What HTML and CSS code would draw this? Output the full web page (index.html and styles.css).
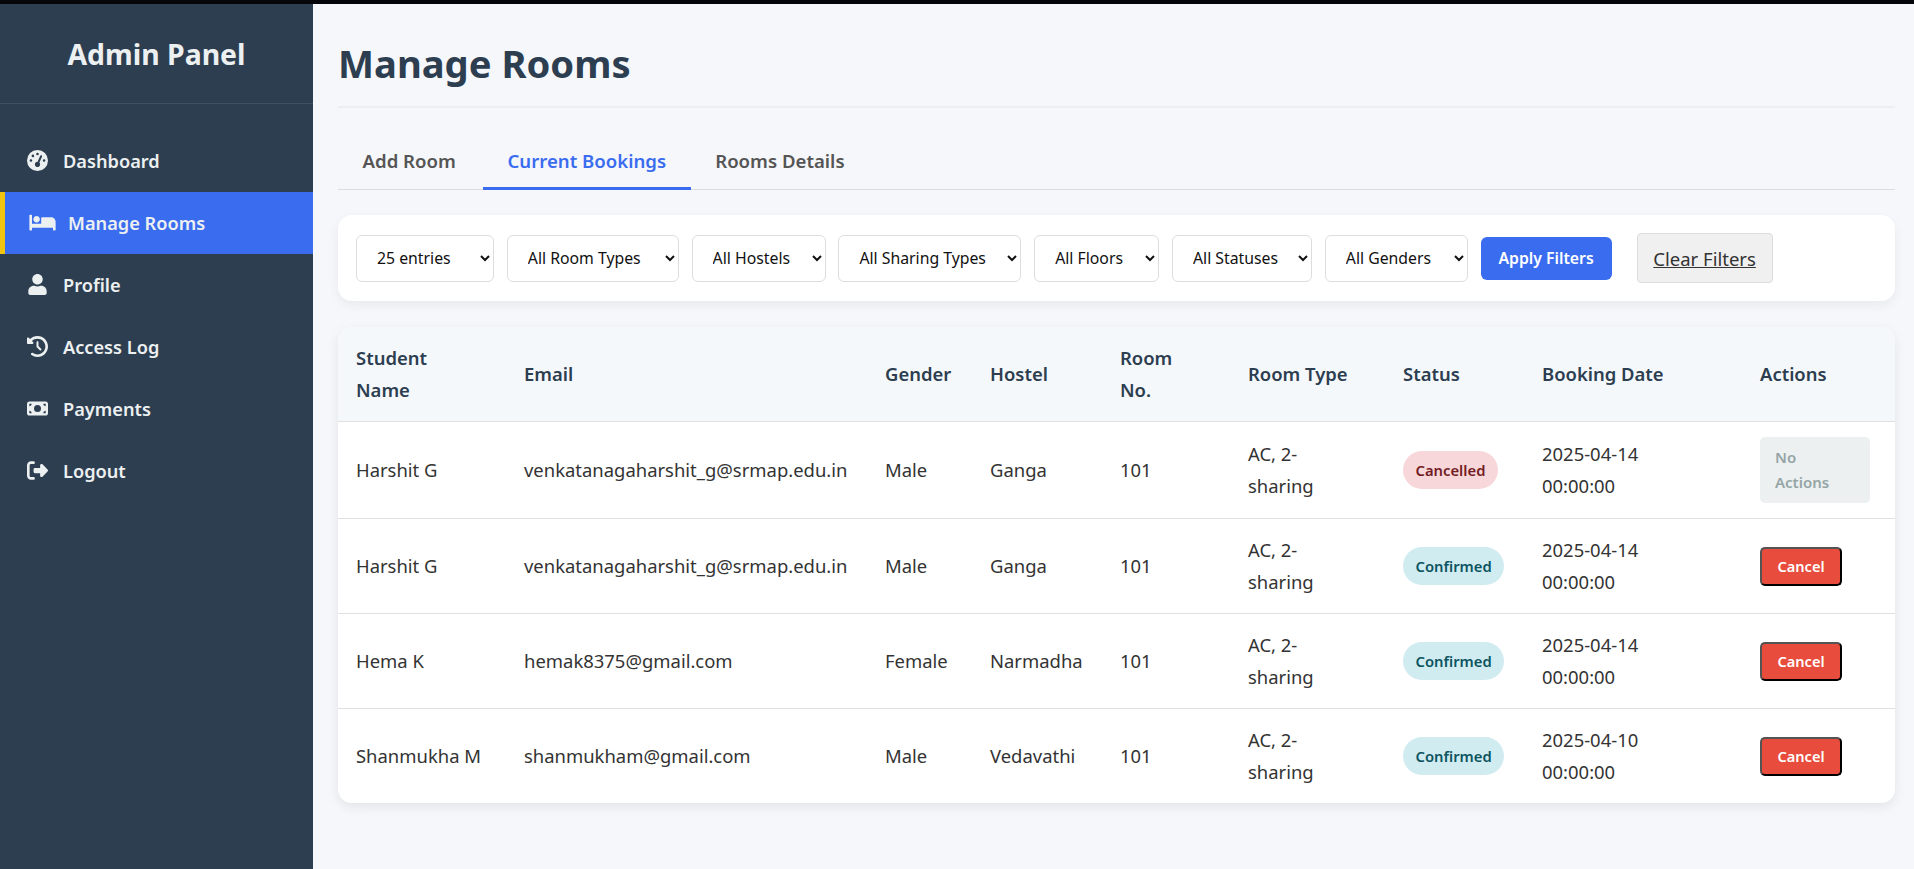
FILE: index.html
```html
<!DOCTYPE html>
<html lang="en">
  <head>
    <meta charset="UTF-8" />
    <meta name="viewport" content="width=device-width, initial-scale=1.0" />
    <title>Manage Rooms</title>
    <link rel="stylesheet" href="styles.css">
  </head>
  <body>
    <div class="top-strip"></div>
    <div class="layout">
      <aside class="sidebar">
        <div class="sidebar-header"><h2>Admin Panel</h2></div>
        <ul class="nav">
          <li>
            <a href="#">
              <svg class="icon" viewBox="0 0 512 512"><path d="M0 256a256 256 0 1 1 512 0A256 256 0 1 1 0 256zM288 96a32 32 0 1 0 -64 0 32 32 0 1 0 64 0zM256 416c35.3 0 64-28.7 64-64c0-17.4-6.9-33.1-18.1-44.6L366 161.7c5.3-12.1-.2-26.3-12.3-31.6s-26.3 .2-31.6 12.3L257.9 288c-.6 0-1.3 0-1.9 0c-35.3 0-64 28.7-64 64s28.7 64 64 64zM176 144a32 32 0 1 0 -64 0 32 32 0 1 0 64 0zM96 288a32 32 0 1 0 0-64 32 32 0 1 0 0 64zm352-32a32 32 0 1 0 -64 0 32 32 0 1 0 64 0z"/></svg>
              Dashboard
            </a>
          </li>
          <li class="active">
            <a href="#">
              <svg class="icon icon-wide" viewBox="0 0 640 512"><path d="M176 256c44.11 0 80-35.89 80-80s-35.89-80-80-80-80 35.89-80 80 35.89 80 80 80zm352-128H304c-8.84 0-16 7.16-16 16v144H64V80c0-8.84-7.16-16-16-16H16C7.16 64 0 71.16 0 80v352c0 8.84 7.16 16 16 16h32c8.84 0 16-7.16 16-16v-48h512v48c0 8.84 7.16 16 16 16h32c8.84 0 16-7.16 16-16V240c0-61.86-50.14-112-112-112z"/></svg>
              Manage Rooms
            </a>
          </li>
          <li>
            <a href="#">
              <svg class="icon" viewBox="0 0 448 512"><path d="M224 256c70.7 0 128-57.3 128-128S294.7 0 224 0 96 57.3 96 128s57.3 128 128 128zm89.6 32h-16.7c-22.2 10.2-46.9 16-72.9 16s-50.6-5.8-72.9-16h-16.7C60.2 288 0 348.2 0 422.4V464c0 26.5 21.5 48 48 48h352c26.5 0 48-21.5 48-48v-41.6c0-74.2-60.2-134.4-134.4-134.4z"/></svg>
              Profile
            </a>
          </li>
          <li>
            <a href="#">
              <svg class="icon" viewBox="0 0 512 512"><path d="M75 75L41 41C25.9 25.9 0 36.6 0 57.9V168c0 13.3 10.7 24 24 24H134.1c21.4 0 32.1-25.9 17-41l-30.8-30.8C155 85.5 203 64 256 64c106 0 192 86 192 192s-86 192-192 192c-40.8 0-78.6-12.7-109.7-34.4c-14.5-10.1-34.4-6.6-44.6 7.9s-6.6 34.4 7.9 44.6C151.2 495 201.7 512 256 512c141.4 0 256-114.6 256-256S397.4 0 256 0C185.3 0 121.3 28.7 75 75zm181 53c-13.3 0-24 10.7-24 24V256c0 6.4 2.5 12.5 7 17l72 72c9.4 9.4 24.6 9.4 33.9 0s9.4-24.6 0-33.9l-65-65V152c0-13.3-10.7-24-24-24z"/></svg>
              Access Log
            </a>
          </li>
          <li>
            <a href="#">
              <svg class="icon" viewBox="0 0 576 512"><path d="M64 64C28.7 64 0 92.7 0 128V384c0 35.3 28.7 64 64 64H512c35.3 0 64-28.7 64-64V128c0-35.3-28.7-64-64-64H64zm64 320H64V320c35.3 0 64 28.7 64 64zM64 192V128h64c0 35.3-28.7 64-64 64zM448 384c0-35.3 28.7-64 64-64v64H448zm64-192c-35.3 0-64-28.7-64-64h64v64zM288 160a96 96 0 1 1 0 192 96 96 0 1 1 0-192z"/></svg>
              Payments
            </a>
          </li>
          <li>
            <a href="#">
              <svg class="icon" viewBox="0 0 512 512"><path d="M377.9 105.9L500.7 228.7c7.2 7.2 11.3 17.1 11.3 27.3s-4.1 20.1-11.3 27.3L377.9 406.1c-6.4 6.4-15 9.9-24 9.9c-18.7 0-33.9-15.2-33.9-33.9l0-62.1-128 0c-17.7 0-32-14.3-32-32l0-64c0-17.7 14.3-32 32-32l128 0 0-62.1c0-18.7 15.2-33.9 33.9-33.9c9 0 17.6 3.6 24 9.9zM160 96L96 96c-17.7 0-32 14.3-32 32l0 256c0 17.7 14.3 32 32 32l64 0c17.7 0 32 14.3 32 32s-14.3 32-32 32l-64 0c-53 0-96-43-96-96L0 128C0 75 43 32 96 32l64 0c17.7 0 32 14.3 32 32s-14.3 32-32 32z"/></svg>
              Logout
            </a>
          </li>
        </ul>
      </aside>

      <main class="content">
        <h1 class="page-title">Manage Rooms</h1>

        <div class="tabs">
          <a class="tab tab-first" href="#">Add Room</a>
          <a class="tab tab-active" href="#">Current Bookings</a>
          <a class="tab" href="#">Rooms Details</a>
        </div>

        <div class="filters">
          <select class="filter w-entries"><option>25 entries</option></select>
          <select class="filter w-types"><option>All Room Types</option></select>
          <select class="filter w-hostels"><option>All Hostels</option></select>
          <select class="filter w-sharing"><option>All Sharing Types</option></select>
          <select class="filter w-floors"><option>All Floors</option></select>
          <select class="filter w-statuses"><option>All Statuses</option></select>
          <select class="filter w-genders"><option>All Genders</option></select>
          <button class="apply-btn">Apply Filters</button>
          <a class="clear-btn" href="#">Clear Filters</a>
        </div>

        <div class="table-card">
          <table class="bookings">
            <colgroup>
              <col class="c-name"><col class="c-email"><col class="c-gender"><col class="c-hostel"><col class="c-room">
              <col class="c-type"><col class="c-status"><col class="c-date"><col class="c-actions">
            </colgroup>
            <thead>
              <tr>
                <th>Student<br>Name</th>
                <th>Email</th>
                <th>Gender</th>
                <th>Hostel</th>
                <th>Room<br>No.</th>
                <th>Room Type</th>
                <th>Status</th>
                <th>Booking Date</th>
                <th>Actions</th>
              </tr>
            </thead>
            <tbody>
              <tr>
                <td>Harshit G</td>
                <td>venkatanagaharshit_g@srmap.edu.in</td>
                <td>Male</td>
                <td>Ganga</td>
                <td>101</td>
                <td>AC, 2-<br>sharing</td>
                <td><span class="badge badge-cancelled">Cancelled</span></td>
                <td>2025-04-14<br>00:00:00</td>
                <td><span class="no-actions">No<br>Actions</span></td>
              </tr>
              <tr>
                <td>Harshit G</td>
                <td>venkatanagaharshit_g@srmap.edu.in</td>
                <td>Male</td>
                <td>Ganga</td>
                <td>101</td>
                <td>AC, 2-<br>sharing</td>
                <td><span class="badge badge-confirmed">Confirmed</span></td>
                <td>2025-04-14<br>00:00:00</td>
                <td><button class="cancel-btn">Cancel</button></td>
              </tr>
              <tr>
                <td>Hema K</td>
                <td>hemak8375@gmail.com</td>
                <td>Female</td>
                <td>Narmadha</td>
                <td>101</td>
                <td>AC, 2-<br>sharing</td>
                <td><span class="badge badge-confirmed">Confirmed</span></td>
                <td>2025-04-14<br>00:00:00</td>
                <td><button class="cancel-btn">Cancel</button></td>
              </tr>
              <tr>
                <td>Shanmukha M</td>
                <td>shanmukham@gmail.com</td>
                <td>Male</td>
                <td>Vedavathi</td>
                <td>101</td>
                <td>AC, 2-<br>sharing</td>
                <td><span class="badge badge-confirmed">Confirmed</span></td>
                <td>2025-04-10<br>00:00:00</td>
                <td><button class="cancel-btn">Cancel</button></td>
              </tr>
            </tbody>
          </table>
        </div>
      </main>
    </div>
  </body>
</html>
```

FILE: styles.css
```css
* {
  box-sizing: border-box;
}
body {
  margin: 0;
  height: 869px;
  overflow: hidden;
  font-family: "Noto Sans", sans-serif;
  background: #f5f7fb;
  color: #333;
}
.top-strip {
  height: 4px;
  background: #05060a;
}
.layout {
  display: flex;
  height: 865px;
}

/* sidebar */
.sidebar {
  width: 313px;
  flex-shrink: 0;
  background: #2c3e50;
  color: #ecf0f1;
}
.sidebar-header {
  height: 100px;
  border-bottom: 1px solid #3e5062;
  display: flex;
  align-items: center;
  justify-content: center;
}
.sidebar-header h2 {
  margin: 0;
  font-size: 28.4px;
  font-weight: 700;
}
.nav {
  list-style: none;
  margin: 25.5px 0 0;
  padding: 0;
}
.nav a {
  display: flex;
  align-items: center;
  gap: 15px;
  height: 62px;
  padding-left: 27px;
  color: #ecf0f1;
  text-decoration: none;
  font-size: 18.2px;
  font-weight: 600;
}
.nav .active a {
  background: #3a6cf0;
  border-left: 5px solid #f1c40f;
  padding-left: 24px;
  gap: 12px;
}
.icon {
  width: 21px;
  height: 21px;
  fill: #ecf0f1;
  flex-shrink: 0;
}
.icon-wide {
  width: 27px;
}

/* main */
.content {
  flex: 1;
  padding: 0 19px 0 25px;
}
.page-title {
  margin: 0;
  height: 104px;
  padding-top: 32px;
  border-bottom: 2px solid #eeeeee;
  color: #2c3e50;
  font-size: 38.2px;
  font-weight: 700;
  line-height: 54px;
}
.tabs {
  display: flex;
  margin-top: 23px;
  border-bottom: 1px solid #dddddd;
  height: 59px;
}
.tab {
  height: 59px;
  padding: 0 24.5px;
  display: flex;
  align-items: center;
  color: #555;
  text-decoration: none;
  font-size: 18.6px;
  font-weight: 600;
}
.tab-first {
  width: 145px;
}
.tab-active {
  color: #3a6cf0;
  border-bottom: 3px solid #3a6cf0;
  padding-top: 3px;
}

.filters {
  margin-top: 25px;
  height: 86px;
  padding: 0 18px;
  display: flex;
  align-items: center;
  background: #fff;
  border-radius: 14px;
  box-shadow: 0 4px 12px rgba(0, 0, 0, 0.06);
}
.filter {
  height: 47px;
  margin-right: 12.8px;
  padding: 0 4px 0 16px;
  background: #fff;
  border: 1px solid #dddddd;
  border-radius: 6px;
  font-family: inherit;
  font-size: 15.8px;
  color: #111;
}
.w-entries { width: 138px; }
.w-types { width: 172px; }
.w-hostels { width: 134px; }
.w-sharing { width: 183px; }
.w-floors { width: 125px; }
.w-statuses { width: 140px; }
.w-genders { width: 143px; }
.apply-btn {
  width: 131px;
  height: 43px;
  background: #3a6cf0;
  color: #fff;
  border: none;
  border-radius: 6px;
  font-family: inherit;
  font-size: 15.8px;
  font-weight: 600;
}
.clear-btn {
  margin-left: 25px;
  width: 136px;
  height: 50px;
  display: flex;
  align-items: center;
  justify-content: center;
  background: #f0f0f0;
  border: 1px solid #dddddd;
  border-radius: 4px;
  color: #333;
  font-size: 18.5px;
}

/* table */
.table-card {
  margin-top: 26px;
  background: #fff;
  border-radius: 14px;
  overflow: hidden;
  box-shadow: 0 4px 12px rgba(0, 0, 0, 0.08);
}
.bookings {
  width: 100%;
  table-layout: fixed;
  border-collapse: collapse;
  font-size: 18.45px;
  line-height: 32px;
}
.c-name { width: 168px; }
.c-email { width: 361px; }
.c-gender { width: 105px; }
.c-hostel { width: 130px; }
.c-room { width: 128px; }
.c-type { width: 155px; }
.c-status { width: 139px; }
.c-date { width: 218px; }
.c-actions { width: 153px; }
.bookings th {
  padding: 15px 18px;
  background: #f5f8fb;
  color: #2c3e50;
  font-weight: 600;
  text-align: left;
  border-bottom: 1px solid #e0e0e0;
}
.bookings td {
  padding: 15px 18px;
  border-bottom: 1px solid #e0e0e0;
  white-space: nowrap;
}
.bookings tr:last-child td {
  border-bottom: none;
}
.badge {
  display: inline-block;
  padding: 0 12.5px;
  height: 38px;
  line-height: 38px;
  border-radius: 19px;
  font-size: 14.8px;
  font-weight: 600;
  vertical-align: middle;
}
.badge-cancelled {
  background: #f8d7da;
  color: #721c24;
}
.badge-confirmed {
  background: #d1ecf1;
  color: #0c5460;
}
.no-actions {
  display: block;
  width: 110px;
  padding: 8px 15px;
  background: #ecf0f1;
  color: #95a5a6;
  border-radius: 5px;
  font-size: 15px;
  font-weight: 600;
  line-height: 25px;
}
.cancel-btn {
  display: block;
  width: 82px;
  height: 39px;
  background: #e74c3c;
  color: #fff;
  border: 2px outset #000;
  border-radius: 5px;
  font-family: inherit;
  font-size: 14.6px;
  font-weight: 600;
}
```
